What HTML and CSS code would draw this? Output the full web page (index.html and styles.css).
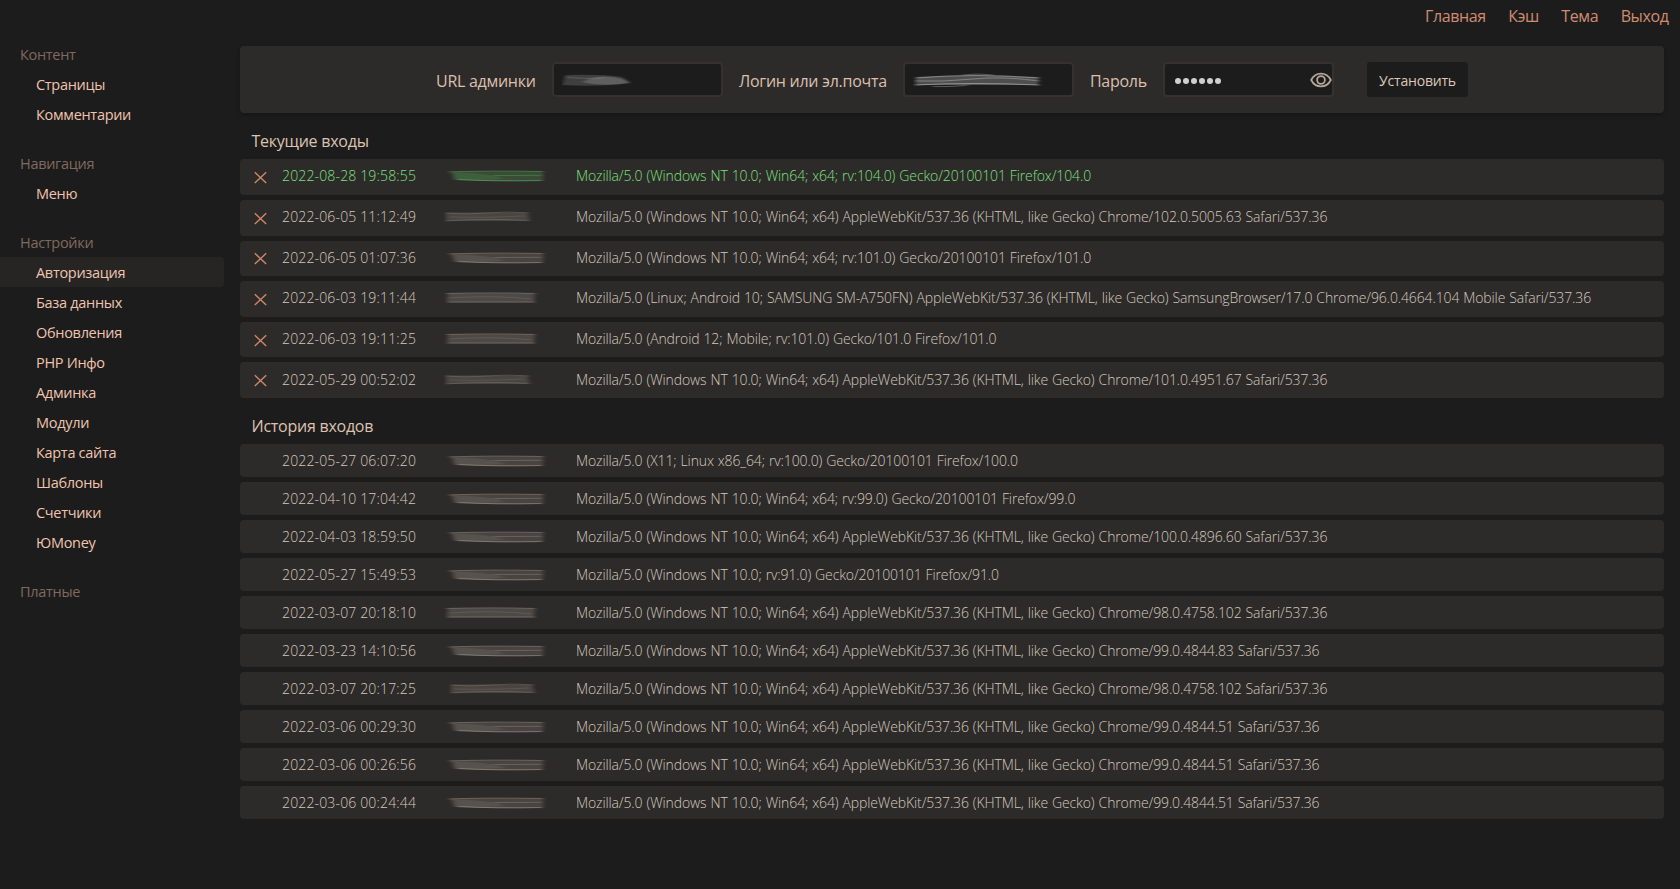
FILE: index.html
```html
<!DOCTYPE html>
<html lang="ru">
<head>
    <meta charset="UTF-8">
    <meta name="viewport" content="width=device-width, initial-scale=1.0">
    <title>Авторизация</title>
    <link rel="stylesheet" href="styles.css">
</head>
<body>
    <!-- shared icons -->
    <svg class="sprite" width="0" height="0">
        <defs>
            <filter id="soft" x="-10%" y="-30%" width="120%" height="160%">
                <feGaussianBlur stdDeviation="2 0.7"/>
            </filter>
            <symbol id="cross" viewBox="0 0 13 13">
                <path d="M0.8 1.3 L12.2 11.9 M12.2 1.3 L0.8 11.9" fill="none" stroke="currentColor" stroke-width="1.4"/>
            </symbol>
            <symbol id="ip-long" viewBox="0 0 104 20">
                <g filter="url(#soft)" fill="none" stroke="currentColor">
                    <path d="M7 5.5 H99 V14 Q60 16 10 14 Z" fill="currentColor" stroke="none" opacity=".25"/>
                    <path d="M10 7 Q20 6 38 8 T60 13 Q30 15 11 13 Z" fill="currentColor" stroke="none" opacity=".18"/>
                    <path d="M5 6 Q40 4.5 99 5.5" opacity=".5"/>
                    <path d="M50 9.5 L98 9.3" opacity=".4"/>
                    <path d="M14 13.5 Q50 15.5 98 14.5" opacity=".7"/>
                </g>
            </symbol>
            <symbol id="ip-short" viewBox="0 0 104 20">
                <g filter="url(#soft)" fill="none" stroke="currentColor">
                    <path d="M2 5.5 H83 L86 14 H2 Z" fill="currentColor" stroke="none" opacity=".26"/>
                    <path d="M2 6 Q20 8 42 6 T85 6" opacity=".3"/>
                    <path d="M5 10 Q40 11 80 9" opacity=".2"/>
                    <path d="M2 14 Q40 11 84 13.5" opacity=".3"/>
                </g>
            </symbol>
            <symbol id="ip-mid" viewBox="0 0 104 20">
                <g filter="url(#soft)" fill="none" stroke="currentColor">
                    <path d="M4 5 H91 L90 14.5 H3 Z" fill="currentColor" stroke="none" opacity=".29"/>
                    <path d="M2 5.5 Q50 4 91 5.5" opacity=".4"/>
                    <path d="M5 10 Q50 7 88 11" opacity=".25"/>
                    <path d="M4 14 Q50 14 91 14" opacity=".45"/>
                </g>
            </symbol>
        </defs>
    </svg>

    <header class="topbar">
        <a href="#">Главная</a>
        <a href="#">Кэш</a>
        <a href="#">Тема</a>
        <a href="#">Выход</a>
    </header>

    <div class="layout">
        <nav class="sidebar">
            <div class="group">
                <div class="group-title">Контент</div>
                <a href="#">Страницы</a>
                <a href="#">Комментарии</a>
            </div>
            <div class="group">
                <div class="group-title">Навигация</div>
                <a href="#">Меню</a>
            </div>
            <div class="group">
                <div class="group-title">Настройки</div>
                <a href="#" class="active">Авторизация</a>
                <a href="#">База данных</a>
                <a href="#">Обновления</a>
                <a href="#">PHP Инфо</a>
                <a href="#">Админка</a>
                <a href="#">Модули</a>
                <a href="#">Карта сайта</a>
                <a href="#">Шаблоны</a>
                <a href="#">Счетчики</a>
                <a href="#">ЮMoney</a>
            </div>
            <div class="group">
                <div class="group-title">Платные</div>
            </div>
        </nav>

        <main class="content">
            <form class="panel">
                <label class="label-url">URL админки</label>
                <div class="field">
                    <svg class="scribble" viewBox="0 0 140 20" width="140" height="20">
                        <g filter="url(#soft)" fill="none" stroke="currentColor">
                            <path d="M4 5 Q40 4 60 7 L68 13 Q40 17 0 15 Z" fill="currentColor" stroke="none" opacity=".28"/>
                            <path d="M20 12 Q34 5 50 7 T67 13 Q40 17 20 12 Z" fill="currentColor" stroke="none" opacity=".35"/>
                            <path d="M3 7 Q20 9 42 8" opacity=".3"/>
                        </g>
                    </svg>
                </div>
                <label class="label-login">Логин или эл.почта</label>
                <div class="field">
                    <svg class="scribble" viewBox="0 0 140 20" width="140" height="20">
                        <g filter="url(#soft)" fill="none" stroke="currentColor">
                            <path d="M3 7 Q70 4 125 7 V15 H3 Z" fill="currentColor" stroke="none" opacity=".4"/>
                            <path d="M3 8 Q60 3 126 8" opacity=".8"/>
                            <path d="M2 11 Q30 12 60 9 T126 11" opacity=".7"/>
                            <path d="M2 15 Q60 12 126 15" opacity=".9"/>
                            <path d="M20 16.5 Q40 17 55 15 M50 5 Q65 3 80 5" opacity=".5"/>
                        </g>
                    </svg>
                </div>
                <label class="label-pass">Пароль</label>
                <div class="field">
                    <span class="dots"><i></i><i></i><i></i><i></i><i></i><i></i></span>
                    <svg class="eye" viewBox="0 0 22 16" width="22" height="16">
                        <path d="M1.2 8 C3.4 3.7 6.8 1.6 11 1.6 S18.6 3.7 20.8 8 C18.6 12.3 15.2 14.4 11 14.4 S3.4 12.3 1.2 8 Z"/>
                        <circle cx="11" cy="8" r="3.9"/>
                    </svg>
                </div>
                <button type="button">Установить</button>
            </form>

            <h2>Текущие входы</h2>
            <div class="rows current">
                <div class="row me"><svg class="cross"><use href="#cross"/></svg><time>2022-08-28 19:58:55</time><svg class="ip"><use href="#ip-long"/></svg><span>Mozilla/5.0 (Windows NT 10.0; Win64; x64; rv:104.0) Gecko/20100101 Firefox/104.0</span></div>
                <div class="row"><svg class="cross"><use href="#cross"/></svg><time>2022-06-05 11:12:49</time><svg class="ip"><use href="#ip-short"/></svg><span>Mozilla/5.0 (Windows NT 10.0; Win64; x64) AppleWebKit/537.36 (KHTML, like Gecko) Chrome/102.0.5005.63 Safari/537.36</span></div>
                <div class="row"><svg class="cross"><use href="#cross"/></svg><time>2022-06-05 01:07:36</time><svg class="ip"><use href="#ip-long"/></svg><span>Mozilla/5.0 (Windows NT 10.0; Win64; x64; rv:101.0) Gecko/20100101 Firefox/101.0</span></div>
                <div class="row"><svg class="cross"><use href="#cross"/></svg><time>2022-06-03 19:11:44</time><svg class="ip"><use href="#ip-mid"/></svg><span>Mozilla/5.0 (Linux; Android 10; SAMSUNG SM-A750FN) AppleWebKit/537.36 (KHTML, like Gecko) SamsungBrowser/17.0 Chrome/96.0.4664.104 Mobile Safari/537.36</span></div>
                <div class="row"><svg class="cross"><use href="#cross"/></svg><time>2022-06-03 19:11:25</time><svg class="ip"><use href="#ip-mid"/></svg><span>Mozilla/5.0 (Android 12; Mobile; rv:101.0) Gecko/101.0 Firefox/101.0</span></div>
                <div class="row"><svg class="cross"><use href="#cross"/></svg><time>2022-05-29 00:52:02</time><svg class="ip"><use href="#ip-short"/></svg><span>Mozilla/5.0 (Windows NT 10.0; Win64; x64) AppleWebKit/537.36 (KHTML, like Gecko) Chrome/101.0.4951.67 Safari/537.36</span></div>
            </div>

            <h2>История входов</h2>
            <div class="rows history">
                <div class="row"><time>2022-05-27 06:07:20</time><svg class="ip"><use href="#ip-long"/></svg><span>Mozilla/5.0 (X11; Linux x86_64; rv:100.0) Gecko/20100101 Firefox/100.0</span></div>
                <div class="row"><time>2022-04-10 17:04:42</time><svg class="ip"><use href="#ip-long"/></svg><span>Mozilla/5.0 (Windows NT 10.0; Win64; x64; rv:99.0) Gecko/20100101 Firefox/99.0</span></div>
                <div class="row"><time>2022-04-03 18:59:50</time><svg class="ip"><use href="#ip-long"/></svg><span>Mozilla/5.0 (Windows NT 10.0; Win64; x64) AppleWebKit/537.36 (KHTML, like Gecko) Chrome/100.0.4896.60 Safari/537.36</span></div>
                <div class="row"><time>2022-05-27 15:49:53</time><svg class="ip"><use href="#ip-long"/></svg><span>Mozilla/5.0 (Windows NT 10.0; rv:91.0) Gecko/20100101 Firefox/91.0</span></div>
                <div class="row"><time>2022-03-07 20:18:10</time><svg class="ip"><use href="#ip-mid"/></svg><span>Mozilla/5.0 (Windows NT 10.0; Win64; x64) AppleWebKit/537.36 (KHTML, like Gecko) Chrome/98.0.4758.102 Safari/537.36</span></div>
                <div class="row"><time>2022-03-23 14:10:56</time><svg class="ip"><use href="#ip-long"/></svg><span>Mozilla/5.0 (Windows NT 10.0; Win64; x64) AppleWebKit/537.36 (KHTML, like Gecko) Chrome/99.0.4844.83 Safari/537.36</span></div>
                <div class="row"><time>2022-03-07 20:17:25</time><svg class="ip"><use href="#ip-short" x="5"/></svg><span>Mozilla/5.0 (Windows NT 10.0; Win64; x64) AppleWebKit/537.36 (KHTML, like Gecko) Chrome/98.0.4758.102 Safari/537.36</span></div>
                <div class="row"><time>2022-03-06 00:29:30</time><svg class="ip"><use href="#ip-long"/></svg><span>Mozilla/5.0 (Windows NT 10.0; Win64; x64) AppleWebKit/537.36 (KHTML, like Gecko) Chrome/99.0.4844.51 Safari/537.36</span></div>
                <div class="row"><time>2022-03-06 00:26:56</time><svg class="ip"><use href="#ip-long"/></svg><span>Mozilla/5.0 (Windows NT 10.0; Win64; x64) AppleWebKit/537.36 (KHTML, like Gecko) Chrome/99.0.4844.51 Safari/537.36</span></div>
                <div class="row"><time>2022-03-06 00:24:44</time><svg class="ip"><use href="#ip-long"/></svg><span>Mozilla/5.0 (Windows NT 10.0; Win64; x64) AppleWebKit/537.36 (KHTML, like Gecko) Chrome/99.0.4844.51 Safari/537.36</span></div>
            </div>
        </main>
    </div>
</body>
</html>
```
FILE: styles.css
```css
* {
    box-sizing: border-box;
}
body {
    margin: 0;
    min-height: 100vh;
    background-color: #1c1c1c;
    color: #d3c8bf;
    font-family: "Open Sans", "Noto Sans", sans-serif;
    font-size: 14px;
}
a {
    text-decoration: none;
}
.sprite {
    display: block;
}
.topbar {
    display: flex;
    justify-content: flex-end;
    gap: 22.5px;
    height: 39px;
    padding-right: 11.5px;
    font-size: 16px;
    letter-spacing: -0.4px;
    line-height: 32px;
}
.topbar a {
    color: #d08c70;
}
.layout {
    display: flex;
    align-items: flex-start;
}
.sidebar {
    width: 224px;
    margin-right: 16px;
}
.group {
    margin-bottom: 19px;
    font-size: 14.5px;
    letter-spacing: -0.3px;
    line-height: 31px;
}
.group-title {
    height: 30px;
    padding-left: 20px;
    color: #80695f;
}
.group a {
    display: block;
    height: 30px;
    padding-left: 36px;
    color: #f0c4ae;
}
.group a.active {
    background-color: #262524;
    border-radius: 0 4px 4px 0;
}
.content {
    width: 1424px;
    padding-top: 7px;
}
.panel {
    display: flex;
    align-items: center;
    height: 67px;
    padding-left: 196px;
    background-color: #2d2b29;
    border-radius: 4px;
    box-shadow: 0 2px 4px rgba(0, 0, 0, 0.25);
}
.panel label {
    padding-top: 2px;
    color: #dcbfad;
    font-size: 16px;
    letter-spacing: -0.28px;
    white-space: nowrap;
}
.label-url {
    width: 116px;
}
.label-login {
    width: 164px;
}
.label-pass {
    width: 73px;
}
.field {
    display: flex;
    align-items: center;
    width: 171px;
    height: 35px;
    margin-right: 16px;
    padding-left: 8px;
    border: 2px solid #353130;
    border-radius: 4px;
    background-color: #1c1c1c;
}
.scribble {
    color: #9a9a9a;
}
.dots {
    display: flex;
    gap: 2px;
    padding: 3px 0 0 2px;
}
.dots i {
    width: 6px;
    height: 6px;
    border-radius: 50%;
    background-color: #d0d0d0;
}
.eye {
    margin-left: auto;
    margin-right: 0.5px;
    fill: none;
    stroke: #b5a699;
    stroke-width: 1.8;
}
.panel button {
    width: 101px;
    height: 35px;
    margin-left: 17px;
    padding: 2px 0 0;
    border: none;
    border-radius: 3px;
    background-color: #1c1c1c;
    color: #dcc8b8;
    font-family: inherit;
    font-size: 14px;
    letter-spacing: -0.2px;
}
h2 {
    height: 46px;
    margin: 0;
    padding-left: 11.5px;
    color: #dcc3b0;
    font-size: 16px;
    font-weight: 400;
    letter-spacing: -0.25px;
    line-height: 56px;
}
.panel + h2 {
    height: 46.4px;
}
.rows {
    display: flex;
    flex-direction: column;
    gap: 5px;
}
.row {
    display: flex;
    align-items: center;
    height: 33px;
    padding-left: 42px;
    border-radius: 4px;
    background-color: #2d2b29;
    font-weight: 300;
    line-height: 33px;
    white-space: nowrap;
}
.current .row {
    height: 35.6px;
    padding: 0 0 2px 14px;
}
.current .row.me {
    padding-bottom: 3px;
    color: #7ce07e;
}
.cross {
    width: 13px;
    height: 13px;
    margin: 3px 15px 0 0;
    color: #cf8769;
}
.row time {
    width: 162px;
    letter-spacing: 0.15px;
}
.row .ip {
    width: 104px;
    height: 20px;
    margin: 1px 28px 0 0;
    color: #9c918c;
}
.row.me .ip {
    color: #5cae5e;
}
.row span {
    letter-spacing: -0.12px;
    word-spacing: 0.5px;
}
```
